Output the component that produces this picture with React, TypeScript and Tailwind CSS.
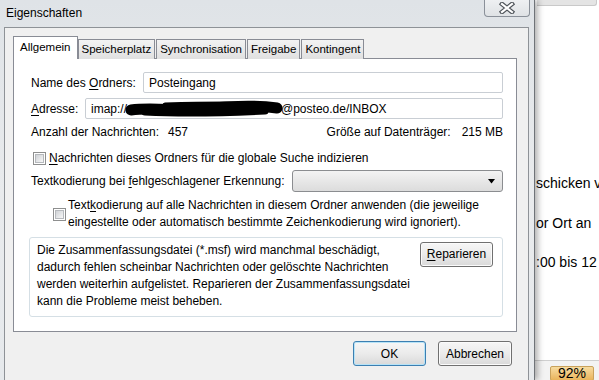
import clsx from "clsx";
import type { ReactNode } from "react";

const TABS = ["Allgemein", "Speicherplatz", "Synchronisation", "Freigabe", "Kontingent"];

// underlined access key
function Key({ children }: { children: ReactNode }) {
  return <span className="underline decoration-1 underline-offset-[2px]">{children}</span>;
}

function Checkbox() {
  return (
    <span className="flex h-[13px] w-[13px] shrink-0 items-center justify-center border border-[#8e8f8f] bg-white">
      <span className="h-[9px] w-[9px] border border-[#b6b9bd] bg-gradient-to-br from-[#cfd2d6] to-[#f7f7f7]" />
    </span>
  );
}

function WinButton({
  children,
  primary,
  className,
}: {
  children: ReactNode;
  primary?: boolean;
  className?: string;
}) {
  return (
    <div
      className={clsx(
        "flex h-[25px] items-center justify-center rounded-[3px] border bg-gradient-to-b from-[#f6f6f6] via-[#ebebeb] to-[#d9d9d9] text-[12px]",
        primary
          ? "border-[#3c7fb1] shadow-[inset_0_0_0_1px_#b7e3f7]"
          : "border-[#707070] shadow-[inset_0_0_0_1px_#fbfbfb]",
        className,
      )}
    >
      {children}
    </div>
  );
}

function Scribble() {
  return (
    <svg width="158" height="20" viewBox="0 0 158 20" className="-mx-[2px] inline-block align-middle">
      <g stroke="#000" strokeLinecap="round" fill="none">
        <path d="M6 11 C 30 8, 55 13, 80 10 S 130 6, 152 9" strokeWidth="11" />
        <path d="M20 13 C 60 15, 100 14, 140 12" strokeWidth="7" />
        <path d="M40 6 C 70 5, 110 4, 146 6" strokeWidth="5" />
      </g>
    </svg>
  );
}

function CloseButton() {
  return (
    <div className="flex h-[17px] w-[46px] items-center justify-center rounded-b-[4px] border border-t-0 border-[#8a9099] bg-gradient-to-b from-[#eef0f2] to-[#dfe2e5]">
      <svg width="16" height="12" viewBox="0 0 16 12">
        <path d="M3 2 L13 10 M13 2 L3 10" stroke="#4f545a" strokeWidth="4.5" strokeLinecap="square" />
        <path d="M3 2 L13 10 M13 2 L3 10" stroke="#fff" strokeWidth="2.2" strokeLinecap="square" />
      </svg>
    </div>
  );
}

function Dialog() {
  return (
    <div className="relative z-10 flex h-[380px] w-[535px] shrink-0 flex-col border-r border-[#6f7378] bg-gradient-to-b from-[#dfe3e7] via-[#e9ebed] to-[#e6e9ec] shadow-[3px_0_6px_rgba(0,0,0,0.3)]">
      {/* title bar */}
      <div className="flex h-[27px] shrink-0 items-start justify-between">
        <span className="pl-[6px] pt-[6px] text-[12px] leading-[14px] text-black">Eigenschaften</span>
        <div className="mr-[4px]">
          <CloseButton />
        </div>
      </div>

      {/* client area */}
      <div className="ml-[4px] w-[525px] flex-1 border-l border-t border-r border-[#8e9297] bg-[#f0f0f0] pl-[8px] pt-[8px]">
        {/* tabs */}
        <div className="relative z-10 flex h-[23px] items-end text-[11.5px]">
          {TABS.map((t, i) =>
            i === 0 ? (
              <div
                key={t}
                className="flex h-[23px] items-center border border-b-0 border-[#898c95] bg-white px-[6px] pb-[1px]"
              >
                {t}
              </div>
            ) : (
              <div
                key={t}
                className={clsx(
                  "flex h-[20px] items-center border border-b-0 border-[#898c95] bg-gradient-to-b from-[#f3f3f3] to-[#e0e0e0] px-[3px]",
                  i > 1 && "ml-[1px]",
                )}
              >
                {t}
              </div>
            ),
          )}
        </div>

        {/* tab panel */}
        <div className="-mt-px h-[274px] w-[504px] border border-[#898c95] bg-white pl-[17px] pr-[13px] pt-[13px] text-[12px] leading-[14px]">
          <div className="flex h-[21px] items-center justify-between">
            <span>
              Name des <Key>O</Key>rdners:
            </span>
            <div className="flex h-[21px] w-[360px] items-center rounded-[2px] border border-[#c9ced4] pl-[5px]">
              Posteingang
            </div>
          </div>

          <div className="mt-[5px] flex h-[21px] items-center justify-between">
            <span>
              <Key>A</Key>dresse:
            </span>
            <div className="flex h-[21px] w-[418px] items-center overflow-hidden whitespace-nowrap rounded-[2px] border border-[#c9ced4] pl-[5px]">
              imap://
              <Scribble />
              @posteo.de/INBOX
            </div>
          </div>

          <div className="mt-[5px] flex h-[16px] items-center justify-between">
            <span className="flex">
              <span className="w-[137px]">Anzahl der Nachrichten:</span>
              <span>457</span>
            </span>
            <span className="flex gap-[11px]">
              <span>Größe auf Datenträger:</span>
              <span>215 MB</span>
            </span>
          </div>

          <div className="mt-[10px] flex h-[16px] items-center gap-[3px] pl-[2px]">
            <Checkbox />
            <span>
              <Key>N</Key>achrichten dieses Ordners für die globale Suche indizieren
            </span>
          </div>

          <div className="mt-[4px] flex h-[22px] items-center justify-between">
            <span>
              Textkodierung bei <Key>f</Key>ehlgeschlagener Erkennung:
            </span>
            <div className="flex h-[22px] w-[211px] items-center justify-end rounded-[3px] border border-[#8b8d90] bg-gradient-to-b from-[#f3f3f3] to-[#dcdcdc] pr-[6px]">
              <svg width="8" height="5" viewBox="0 0 8 5">
                <path d="M0 0 H7 L3.5 4.5 Z" fill="#000" />
              </svg>
            </div>
          </div>

          <div className="mt-[5px] flex items-center gap-[2px] pl-[22px] leading-[17px]">
            <Checkbox />
            <span>
              Text<Key>k</Key>odierung auf alle Nachrichten in diesem Ordner anwenden (die jeweilige
              <br />
              eingestellte oder automatisch bestimmte Zeichenkodierung wird ignoriert).
            </span>
          </div>

          <div className="-ml-[2px] mt-[6px] flex h-[80px] w-[474px] items-start justify-between rounded-[3px] border border-[#d5dfe5] pl-[7px] pr-[9px] pt-[4px] leading-[17px]">
            <p>
              Die Zusammenfassungsdatei (*.msf) wird manchmal beschädigt,
              <br />
              dadurch fehlen scheinbar Nachrichten oder gelöschte Nachrichten
              <br />
              werden weiterhin aufgelistet. Reparieren der Zusammenfassungsdatei
              <br />
              kann die Probleme meist beheben.
            </p>
            <WinButton className="w-[73px]">
              <span>
                <Key>R</Key>eparieren
              </span>
            </WinButton>
          </div>
        </div>

        {/* dialog buttons */}
        <div className="mt-[9px] flex justify-end gap-[12px] pr-[16px]">
          <WinButton primary className="w-[73px]">
            OK
          </WinButton>
          <WinButton className="w-[74px]">Abbrechen</WinButton>
        </div>
      </div>
    </div>
  );
}

export default function App() {
  return (
    <div className="flex h-[380px] w-[599px] overflow-hidden bg-white font-['Liberation_Sans',Arial,sans-serif] text-black">
      <Dialog />

      {/* document behind the dialog */}
      <div className="flex min-w-0 flex-1 flex-col bg-white">
        <div className="ml-[2px] h-[6px] w-[60px] rounded-br-[3px] border-b border-r border-[#c9c9c9] bg-[#e4e4e4]" />
        <div className="whitespace-nowrap pl-[1px] text-[14px] leading-[20px]">
          <p className="mt-[167px]">schicken v</p>
          <p className="mt-[20px]">or Ort an</p>
          <p className="mt-[19px]">:00 bis 12</p>
        </div>
        <div className="mt-auto h-[20px] border-t border-[#cfcfcf] bg-[#f3f3f3] pl-[15px] pt-[5px]">
          <div className="flex h-[15px] w-[44px] items-start justify-center rounded-[2px] border border-[#c9a25c] bg-gradient-to-b from-[#f7dca0] to-[#e9b45a] text-[14px] leading-[13px]">
            92%
          </div>
        </div>
      </div>
    </div>
  );
}
